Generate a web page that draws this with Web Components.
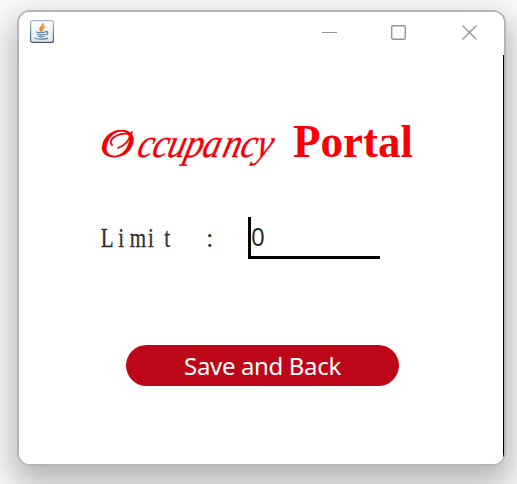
<!DOCTYPE html>
<html lang="en"><head><meta charset="utf-8"><title>Occupancy Portal</title>
<style>html,body{margin:0;height:100%;overflow:hidden;background:#f8f8f8}</style></head><body>
<app-window><title-bar></title-bar><portal-title></portal-title><limit-field value="0"></limit-field><save-button>Save and Back</save-button></app-window>
<script>
const define=(name,html)=>customElements.define(name,class extends HTMLElement{
 constructor(){super();this.attachShadow({mode:'open'}).innerHTML=html;}
 connectedCallback(){const v=this.shadowRoot.querySelector('.value');if(v)v.textContent=this.getAttribute('value');}
});
define('app-window',`<style>
:host{display:block;box-sizing:border-box;height:484px;padding:10px 11px 18px 17px;background:#f9f9f9}
.frame{box-sizing:border-box;height:456px;border:2px solid #b5b5b5;border-radius:13px;box-shadow:0 14px 30px 5px #0004}
.inside{height:100%;border-radius:11px;overflow:hidden;background:linear-gradient(#000,#000) right 0 top 43px/1px 100% no-repeat,#fff}
</style><div class="frame"><div class="inside"><slot></slot></div></div>`);
define('title-bar',`<style>
:host{display:flex;justify-content:space-between;height:43px;box-sizing:border-box;padding:7px 26px 0 10px}
svg{display:block}.controls{display:flex;gap:53px;padding-top:5px}
</style>
<svg width="26" height="26" viewBox="0 0 26 26"><defs><linearGradient id="g" x2="0" y2="1"><stop stop-color="#fff"/><stop offset="1" stop-color="#e3e8ed"/></linearGradient><linearGradient id="e" x2="0" y2="1"><stop stop-color="#a9bcc9"/><stop offset="1" stop-color="#41586c"/></linearGradient></defs>
<rect x="1.600" y="1.600" width="22.800" height="21.800" rx="2" fill="url(#g)" stroke="url(#e)" stroke-width="1.200"/>
<g fill="none" stroke-linecap="round"><path d="M14 5c1 2.500-4 3-3 5.500.3.800 1 1 1.200 1.900M15.500 8c-3 1-3 2.300-2 3.200" stroke="#e88a35" stroke-width="1.700"/>
<g stroke="#54799a" stroke-width="1.200"><path d="M7.500 13c2 .8 6 .8 8.500 0M8.500 15.300c2 .7 5 .7 7 0M9.500 17.500c2 .6 3.500 .6 5.500 0M16.500 12.800c3-.8 3 2.500.2 3.400M6 19c1 1.500 11 1.500 12.500 .2"/></g></g></svg>
<div class="controls"><svg width="16" height="17" viewBox="0 0 16 17"><path d="M0 8.500h15" stroke="#929292"/></svg><svg width="16" height="17" viewBox="0 0 16 17"><rect x=".700" y="1.700" width="13.600" height="13.600" rx="1.500" fill="none" stroke="#929292" stroke-width="1.400"/></svg><svg width="18" height="17" viewBox="0 0 18 17"><path d="M2.500 1.500l14 14M16.500 1.500l-14 14" stroke="#929292" stroke-width="1.300"/></svg></div>`);
define('portal-title',`<style>:host{display:block;height:62px;padding:55px 0 0 71px}svg{display:block;overflow:visible;fill:#f40009;font-family:"Liberation Serif",serif}</style>
<svg width="350" height="62">
<g font-size="41" font-style="italic"><text transform="translate(8.500 47) skewX(-6) scale(1.17 1)">O</text>
<text transform="translate(0 47) skewX(-14) scale(.88 1)" x="52 69 86 106 126 149 169 187" y="0" stroke="#f40009" stroke-width=".3">ccupancy</text></g>
<path d="M22 35C17 30 27 22 41 24M42 22C39 32 34 36 28 38" fill="none" stroke="#f40009" stroke-width="1.800" stroke-linecap="round"/>
<text x="203" y="47" font-size="46" font-weight="bold" fill="#fa0005" textLength="120" lengthAdjust="spacingAndGlyphs">Portal</text></svg>`);
define('limit-field',`<style>:host{display:flex;height:42px;padding:45px 0 0 81px}svg{display:block;overflow:visible;fill:#303030;font-family:"Liberation Serif",serif}
.input{box-sizing:border-box;width:132px;height:42px;border:solid #000;border-width:0 0 3px 3px;color:#303030;font:26px/39px "Noto Sans",sans-serif}.value{display:block;transform:scaleX(.93);transform-origin:0}</style>
<svg width="148" height="42" font-size="27"><text transform="translate(0 29.500) scale(.78 1)" x="1 23.500 38 61.500 82.500" y="0" stroke="#303030" stroke-width=".3">Limit</text><text x="106" y="29.500">:</text></svg><div class="input"><span class="value"></span></div>`);
define('save-button',`<style>:host{display:flex;align-items:center;justify-content:center;box-sizing:border-box;width:273px;height:41px;margin:86px 0 0 107px;border-radius:21px;background:#bd0719;color:#fff;font:24px/42px "Noto Sans",sans-serif}
span{white-space:nowrap;letter-spacing:-.35px}</style><span><slot></slot></span>`);
</script></body></html>
